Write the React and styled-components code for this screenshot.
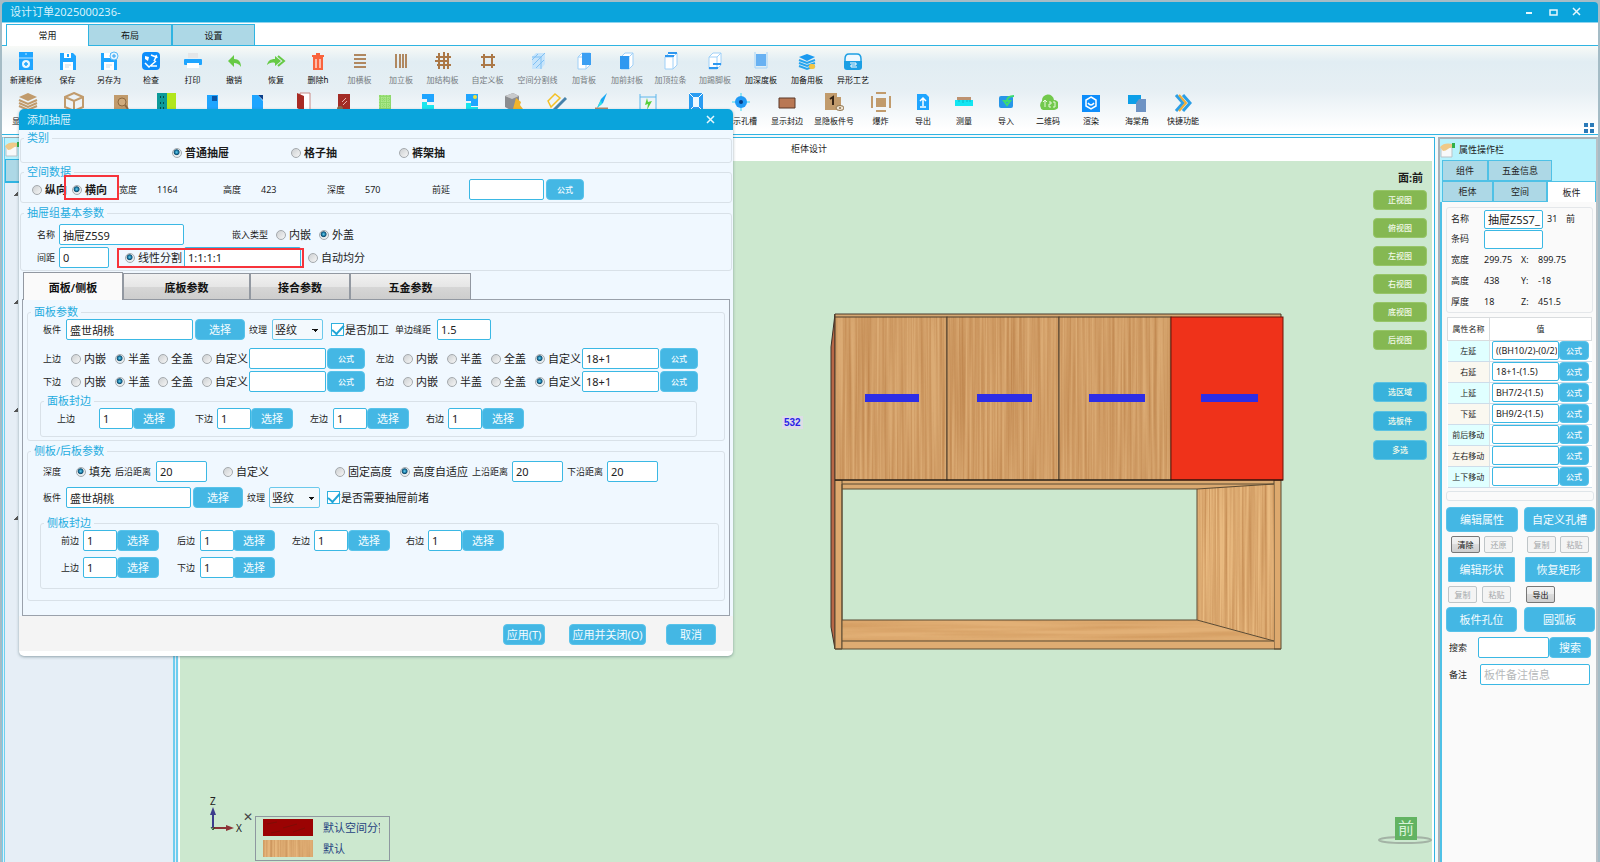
import React from 'react';
import styled, { createGlobalStyle, css } from 'styled-components';

const colors = {
  title: '#0aa4dc',
  line: '#2fb4e2',
  button: '#44b7e4',
  tab: '#add8e6',
  header: '#b8f2fd',
  canvas: '#cce8cf',
  dialog: '#f0f8ff',
};

const GlobalStyle = createGlobalStyle`
  * { box-sizing: border-box; }
  body {
    margin: 0;
    background: #a5bcc6;
    font-family: 'Noto Sans', 'Noto Sans CJK SC', sans-serif;
    font-size: 9px;
    line-height: 12px;
    color: #1c1c1c;
  }
  button, input, select { font-family: inherit; margin: 0; padding: 0; }
`;

const Window = styled.div`
  position: relative;
  display: flex;
  flex-direction: column;
  min-height: 100vh;
  padding: 2px 2px 0;
`;

const TitleBar = styled.header`
  display: flex;
  align-items: center;
  justify-content: space-between;
  height: 21px;
  padding: 0 13px 0 8px;
  border-bottom: 1px solid #8fd4ee;
  border-radius: 4px 4px 0 0;
  background: ${colors.title};
  color: #d6f1fb;
  font-size: 11px;
`;

const WindowButtons = styled.div`
  display: flex;
  gap: 8px;
`;

const GlyphButton = styled.button`
  display: flex;
  align-items: center;
  justify-content: center;
  width: 16px;
  height: 16px;
  border: 0;
  background: none;
  color: #e6f7fd;
`;

const RibbonTabs = styled.nav`
  display: flex;
  height: 23px;
  padding: 1px 0 0 4px;
  border-bottom: 1px solid ${colors.line};
  background: #fff;
`;

const RibbonTab = styled.button`
  width: ${({ $w }) => $w}px;
  height: ${({ $active }) => ($active ? 22 : 21)}px;
  border: 1px solid ${colors.line};
  border-bottom: 0;
  border-right-width: ${({ $active }) => ($active ? 0 : 1)}px;
  background: ${({ $active }) => ($active ? '#fff' : colors.tab)};
  color: #111;
  font-size: 9px;
`;

const Ribbon = styled.div`
  position: relative;
  display: flex;
  flex-direction: column;
  gap: 7px;
  padding: 5px 3px 8px;
  border-bottom: 1px solid ${colors.line};
  background: linear-gradient(#f8faf7, #e1edf3 18%, #e6eff4 50%, #fff 95%);
`;

const ToolRow = styled.div`
  display: flex;
`;

const Tool = styled.button`
  display: flex;
  flex: none;
  flex-direction: column;
  align-items: center;
  gap: 4px;
  width: ${({ $w }) => $w}px;
  height: 34px;
  border: 0;
  background: none;
  color: ${({ $off }) => ($off ? '#757b80' : '#0c0c0c')};
  font-size: 8px;
  line-height: 10px;
  white-space: nowrap;

  svg { flex: none; }
`;

const RibbonCorner = styled.svg`
  position: absolute;
  right: 3px;
  bottom: 0;
`;

const Body = styled.div`
  display: flex;
  flex: 1;
  gap: 1px;
  padding-top: 2px;
  background: #f4f9fb;
`;

const Tree = styled.aside`
  width: 176px;
  border-left: 3px double #6fd0ee;
  border-right: 5px double #6fcdee;
  border-top: 1px solid #9aa5ab;
  background: #e6eef6;
`;

const PanelHeader = styled.div`
  display: flex;
  align-items: center;
  gap: 3px;
  height: 21px;
  background: ${colors.header};
`;

const TreeTab = styled.div`
  width: 60px;
  height: 23px;
  border: 1px solid ${colors.line};
  background: ${colors.tab};
`;

const TreeItems = styled.div`
  display: flex;
  flex-direction: column;
  gap: 104px;
  padding: 9px 0 0 9px;
  border-top: 1px solid ${colors.line};
`;

const Expander = styled.div`
  width: 4px;
  height: 4px;
  background: linear-gradient(135deg, transparent 50%, #555 50%);
`;

const Main = styled.main`
  display: flex;
  flex: 1;
  flex-direction: column;
  border-top: 1px solid ${colors.line};
  border-right: 1px solid ${colors.line};
  margin-right: 2px;
  background: #fff;
`;

const DocTitle = styled.div`
  height: 23px;
  padding: 5px 0 0 5px;
  text-align: center;
`;

const Canvas = styled.div`
  position: relative;
  flex: 1;
  min-height: 640px;
  margin: 0 2px 0 1px;
  background: ${colors.canvas};
`;

const Cabinet = styled.svg`
  position: absolute;
  top: 129px;
  left: 50%;
  margin-left: -36px;
`;

const Dimension = styled.div`
  position: absolute;
  top: 255px;
  left: 50%;
  margin-left: -24px;
  padding: 0 2px;
  background: #dcdce6;
  color: #2a22e8;
  font: bold 10px/13px 'Liberation Sans', sans-serif;
`;

const ViewTools = styled.div`
  position: absolute;
  top: 10px;
  right: 5px;
  display: flex;
  flex-direction: column;
  align-items: flex-end;
`;

const Facing = styled.strong`
  padding: 0 4px 5px 0;
  font-size: 11px;
  line-height: 14px;
`;

const ViewGroup = styled.div`
  display: flex;
  flex-direction: column;
  gap: ${({ $gap }) => $gap}px;
  margin-bottom: 32px;
`;

const ViewButton = styled.button`
  width: 54px;
  height: 20px;
  border: 1px solid ${({ $blue }) => ($blue ? '#5cc3e2' : '#97c568')};
  border-radius: 4px;
  background: ${({ $blue }) => ($blue ? '#38b2dc' : '#85b852')};
  color: #f2fae9;
  font-size: 8px;
  font-weight: 500;
  line-height: 10px;
`;

const Axes = styled.svg`
  position: absolute;
  left: 22px;
  bottom: 22px;
`;

const Legend = styled.div`
  position: absolute;
  left: 75px;
  bottom: 1px;
  display: flex;
  flex-direction: column;
  gap: 4px;
  width: 135px;
  padding: 2px 8px 3px 7px;
  border: 1px solid #8e98a0;
  color: #27437f;
  font-size: 11px;
  line-height: 17px;
`;

const LegendRow = styled.div`
  display: flex;
  gap: 10px;
  height: 17px;
  overflow: hidden;
  white-space: nowrap;

  svg { flex: none; }
  span { width: 57px; overflow: hidden; }
`;

const LegendClose = styled.div`
  position: absolute;
  left: 63px;
  bottom: 39px;
  color: #444;
  font-size: 12px;
`;

const NavCube = styled.div`
  position: absolute;
  right: 0;
  bottom: 16px;
  width: 54px;
  height: 29px;
`;

const CubeFace = styled.div`
  position: absolute;
  top: 0;
  left: 17px;
  width: 22px;
  height: 23px;
  background: #62b362;
  color: #d7f2d7;
  font-size: 16px;
  line-height: 22px;
  text-align: center;
`;

const Props = styled.aside`
  display: flex;
  flex-direction: column;
  width: 160px;
  border: 2px solid #a9b2b8;
  border-bottom: 0;
  border-right: 2px solid #b9c1c6;
  background: #fafafa;
`;

const PropTabs = styled.div`
  display: flex;
  align-items: flex-end;
  height: 21px;
  padding-left: 2px;
  background: ${colors.header};
`;

const PropTab = styled.button`
  width: ${({ $w }) => $w}px;
  height: 21px;
  border: 1px solid #4fc1e6;
  border-bottom-width: ${({ $active }) => ($active ? 0 : 1)}px;
  background: ${({ $active }) => ($active ? '#fff' : colors.tab)};
  color: #222;
  font-size: 9px;
`;

const PropBody = styled.div`
  flex: 1;
  padding: 5px 1px 0 4px;
  border-left: 2px solid #4fc1e6;
`;

const PropBox = styled.div`
  padding: 1px 0 0 4px;
  border: 1px solid #e4e7ea;
  border-radius: 3px;
  width: 147px;
`;

const InfoRow = styled.div`
  display: grid;
  grid-template-columns: ${({ $cols = '33px 37px 17px auto' }) => $cols};
  align-items: center;
  height: ${({ $h = 20 }) => $h}px;
  padding-left: ${({ $pl = 0 }) => $pl}px;
  white-space: nowrap;
`;

const inputBox = css`
  height: ${({ $h = 21 }) => $h}px;
  width: ${({ $w }) => $w}px;
  border: 1px solid #3bb8e4;
  border-radius: 2px;
  background: #fff;
  color: #222;
`;

const TextInput = styled.input`
  ${inputBox}
  padding: 0 1px 0 3px;
  font-size: ${({ $size = 11 }) => $size}px;

  &::placeholder { color: #b5b8ba; opacity: 1; }
`;

const PropTable = styled.table`
  width: 144px;
  margin-left: 1px;
  margin-top: 4px;
  border-collapse: collapse;
  table-layout: fixed;
  background: #fff;

  th {
    height: 23px;
    padding: 0;
    border: 1px solid #d9dcde;
    font-size: 8px;
    font-weight: 400;
  }
  tbody th {
    height: 21px;
    border: 0;
    border-right: 1px solid #dbe2e6;
    border-bottom: 1px solid #cdddea;
  }
  tbody tr:nth-child(odd) th { background: #e0ffff; }
  tbody tr:nth-child(even) th { background: #faf8f0; }
  td {
    padding: 0 0 1px 2px;
    border-bottom: 1px solid #cdddea;
  }
`;

const ValueCell = styled.div`
  display: flex;
  height: 19px;
`;

const BlueButton = styled.button`
  width: ${({ $w }) => $w}px;
  height: ${({ $h = 21 }) => $h}px;
  border: 1px solid #58c3ea;
  border-radius: ${({ $square }) => ($square ? 1 : 4)}px;
  background: ${colors.button};
  color: #f4fcff;
  font-size: ${({ $size = 11 }) => $size}px;
  font-weight: ${({ $size = 11 }) => ($size < 10 ? 500 : 400)};
  line-height: 12px;
  white-space: nowrap;
`;

const EmptyBox = styled.div`
  width: 148px;
  height: 10px;
  margin: 3px 0 6px;
  border: 1px solid #dfe5e9;
  border-radius: 3px;
`;

const Actions = styled.div`
  display: flex;
  gap: ${({ $gap }) => $gap}px;
  padding-left: ${({ $pl = 0 }) => $pl}px;
  margin-bottom: ${({ $mb = 4 }) => $mb}px;
`;

const GreyButton = styled.button`
  width: 29px;
  height: 17px;
  border: 1px solid #777;
  border-radius: 2px;
  background: linear-gradient(#f3f3f3, #ebebeb 50%, #dcdcdc 50%, #cfcfcf);
  color: #111;
  font-size: 8px;
  line-height: 10px;

  &:disabled {
    border-color: #bfc5c8;
    background: #f4f4f4;
    color: #a3a7a9;
  }
`;

const GreySpacer = styled.span`
  width: ${({ $w }) => $w}px;
`;

const Dialog = styled.section`
  position: absolute;
  top: 109px;
  left: 19px;
  width: 714px;
  border-radius: 5px;
  background: #fff;
  box-shadow: 0 1px 3px rgba(60, 90, 100, 0.5);
  overflow: hidden;
`;

const DialogTitle = styled.header`
  display: flex;
  align-items: center;
  justify-content: space-between;
  height: 21px;
  padding: 0 14px 0 8px;
  background: ${colors.title};
  color: #d6f1fb;
  font-size: 11px;
`;

const DialogBody = styled.div`
  padding: 1px 1px 0;
  background: ${colors.dialog};
`;

const Group = styled.fieldset`
  min-width: 0;
  margin: ${({ $m = 0 }) => $m};
  padding: ${({ $p = 0 }) => $p};
  border: 1px solid #d9e1e8;
  border-radius: 3px;

  > legend {
    margin-left: 3px;
    padding: 0 3px;
    color: #26ace0;
    font-size: 11px;
    line-height: 14px;
  }
`;

const Row = styled.div`
  position: relative;
  display: grid;
  grid-template-columns: ${({ $cols }) => $cols};
  align-items: center;
  height: ${({ $h = 21 }) => $h}px;
  padding-left: ${({ $pl }) => $pl}px;
  margin-top: ${({ $mt = 0 }) => $mt}px;
  white-space: nowrap;
`;

const Marker = styled.span`
  position: absolute;
  top: ${({ $top }) => $top}px;
  left: ${({ $left }) => $left}px;
  width: ${({ $w }) => $w}px;
  height: ${({ $h }) => $h}px;
  border: 2px solid #f7333b;
  pointer-events: none;
`;

const Choice = styled.label`
  display: inline-flex;
  align-items: center;
  gap: ${({ $gap = 3 }) => $gap}px;
  font-size: 11px;
  font-weight: ${({ $bold }) => ($bold ? 600 : 400)};
`;

const RadioDot = styled.input.attrs({ type: 'radio' })`
  appearance: none;
  flex: none;
  width: 10px;
  height: 10px;
  border: 1px solid #a4a9ad;
  border-radius: 50%;
  background: linear-gradient(135deg, #cdd0d2, #f6f6f6);

  &:checked {
    background: radial-gradient(circle at 45% 40%, #6ad4f2 0, #17739f 28%, #134f70 38%, #e8edef 52%);
  }
`;

const CheckMark = styled.input.attrs({ type: 'checkbox' })`
  appearance: none;
  display: grid;
  place-items: center;
  flex: none;
  width: 13px;
  height: 13px;
  border: 1px solid #2fb0de;
  background: #fff;

  &:checked::after {
    content: '';
    width: 10px;
    height: 5px;
    border: solid #20a4d6;
    border-width: 0 0 2px 2px;
    transform: translateY(-1px) rotate(-48deg);
  }
`;

const Select = styled.select`
  ${inputBox}
  appearance: none;
  padding: 0 2px;
  border-color: #6bc9ec;
  background: linear-gradient(45deg, transparent 50%, #111 50%) right 7px top 9px / 3px 3px no-repeat,
    linear-gradient(-45deg, transparent 50%, #111 50%) right 4px top 9px / 3px 3px no-repeat, #f3f9fd;
  font-size: 11px;
`;

const FormTabs = styled.div`
  position: relative;
  display: flex;
  align-items: flex-end;
  height: 28px;
  margin: 1px 0 0 3px;
`;

const FormTab = styled.button`
  width: ${({ $w }) => $w}px;
  height: ${({ $active }) => ($active ? 28 : 27)}px;
  border: 1px solid #9298a1;
  border-bottom-width: ${({ $active }) => ($active ? 0 : 1)}px;
  background: ${({ $active }) =>
    $active ? '#fafafa' : 'linear-gradient(#f1f1f1, #e6e6e6 50%, #d6d6d6 52%, #cdcdcd)'};
  color: #111;
  font-size: 11px;
  font-weight: 600;
`;

const FormPanel = styled.div`
  margin: -1px 2px 0;
  padding: 5px 4px 14px;
  border: 1px solid #9aa1ab;
`;

const DialogFooter = styled.footer`
  display: flex;
  justify-content: flex-end;
  height: 35px;
  padding: 8px 17px 0 0;
  margin-bottom: 5px;
  background: #f4f4f4;
`;

const FooterButton = styled(BlueButton)`
  margin-left: ${({ $ml = 0 }) => $ml}px;
`;

/* ---------- toolbar drawings, all on a 20 x 20 grid ---------- */

const B = '#1fa5ff';
const W = '#c19b6c';

const cube = (
  <path d="M4 6h8v12H4zM4 6l4-4h8v12l-4 4M12 6l4-4" fill="#fff" stroke="#9fd0f8" />
);

const icons = {
  cabinet: (
    <>
      <path d="M3 1h14v18H3z" fill={B} />
      <path d="M3 7h14M10 2v2" stroke="#bfe6ff" />
      <circle cx="10" cy="13" r="4" fill="#e9f7ff" />
      <path d="M10 11v4M8 13h4" stroke={B} strokeWidth="1.5" />
    </>
  ),
  save: (
    <>
      <path d="M2 2h13l3 3v14H2z" fill={B} />
      <path d="M6 2h7v5H6zM5 11h10v8H5z" fill="#fff" />
      <path d="M10 3v3" stroke={B} strokeWidth="2" />
      <path d="M7 14h6M7 16h4" stroke="#c9dbe8" />
    </>
  ),
  saveAs: (
    <>
      <path d="M2 2h13l3 3v14H2z" fill={B} />
      <path d="M5 2h6v5H5zM5 11h10v8H5z" fill="#fff" />
      <path d="M7 14h6M7 16h4" stroke="#c9dbe8" />
      <circle cx="15" cy="5" r="4" fill="#e6f4ff" stroke="#5dbcf8" />
      <path d="M15 3v4M13 5h4" stroke="#2aa0ee" />
    </>
  ),
  check: (
    <>
      <rect x="1" y="1" width="18" height="18" rx="4" fill="#0d8dfb" />
      <path d="M4 5l4 1-1 4-3-2z" fill="#fff" />
      <path d="M10 4l5 2-2 4M15 4l1 3M4 12l4 4 7-6M10 15h6" stroke="#fff" fill="none" strokeWidth="1.5" />
    </>
  ),
  print: (
    <>
      <path d="M5 2h10v5H5z" fill="#e4e6e8" />
      <rect x="1" y="8" width="18" height="6" rx="1" fill={B} />
      <path d="M4 12h12v5H4z" fill="#fff" />
    </>
  ),
  undo: <path d="M10 4v4c5 0 7 3 7 8-2-3-4-4-7-4v4L4 10z" fill="#66ca45" />,
  redo: (
    <>
      <path d="M9 5v3c-5 0-7 2-8 6 2-2 5-3 8-2v3l6-5z" fill="#66ca45" />
      <path d="M12 5l6 5-6 5" fill="none" stroke="#66ca45" strokeWidth="2" />
    </>
  ),
  trash: (
    <>
      <path d="M5 6h10v13H5zM4 4h12v2H4zM8 2h4v2H8z" fill="#f9633c" />
      <path d="M8 8v9M12 8v9" stroke="#ffd8cb" strokeWidth="1.5" />
    </>
  ),
  hBars: <path d="M4 4h12M4 8h12M4 12h12M4 16h12" stroke="#b08860" strokeWidth="2" />,
  vBars: <path d="M5 3v14M9 3v14M12 3v14M15 3v14" stroke="#b08860" strokeWidth="2" />,
  lattice: (
    <path d="M6 2v16M11 1v17M15 2v16M3 6h15M2 10h12M4 14h14" stroke="#ab7847" strokeWidth="2" />
  ),
  hash: <path d="M6 3v14M14 3v14M3 6h14M3 14h14" stroke="#ab7847" strokeWidth="2" />,
  split: (
    <>
      <path d="M4 6l4-4h9v11l-4 5H4z" fill="#c6e4fb" />
      <path d="M4 9l6-6M5 14l9-9M8 17l8-8M4 6h9v12M13 6l4-4" stroke="#7fc0f3" fill="none" />
    </>
  ),
  back: (
    <>
      {cube}
      <path d="M8 2h9v12H8z" fill="#3b9ff3" />
    </>
  ),
  front: (
    <>
      {cube}
      <path d="M3 5h9v13H3z" fill="#2f98f0" />
    </>
  ),
  topBar: (
    <>
      {cube}
      <path d="M4 5h9M7 2h9" stroke="#2f98f0" strokeWidth="2" />
    </>
  ),
  kick: (
    <>
      {cube}
      <path d="M4 17h9M8 13h8" stroke="#2f98f0" strokeWidth="2" />
    </>
  ),
  depth: (
    <>
      <path d="M5 3h10v12H5z" fill="#68b1f2" />
      <path d="M4 1v16h12V1" fill="none" stroke="#a5d4f8" />
    </>
  ),
  stack: (
    <>
      <path d="M10 3l8 3-8 4-8-4z" fill="#1a9af0" />
      <path d="M2 9l8 3 8-3M2 12l8 3 8-3M2 15l8 3 8-3" fill="none" stroke="#27a5ee" strokeWidth="2" />
      <rect x="12" y="13" width="6" height="5" rx="2" fill="#f5c542" />
    </>
  ),
  craft: (
    <>
      <path d="M2 11V8c0-4 2-5 4-5h8c2 0 4 1 4 5v3" fill="#eef8ff" stroke="#1c9fe4" strokeWidth="1.5" />
      <path d="M1 10h18v6q0 3-3 3H4q-3 0-3-3z" fill="#1c9fe4" />
      <path d="M7 12h6v2H8v2h6" fill="none" stroke="#fff" />
    </>
  ),
  layers: (
    <>
      <path d="M10 1l9 4-9 4-9-4z" fill={W} />
      <path d="M1 8l9 4 9-4M1 11l9 4 9-4M1 14l9 4 9-4" fill="none" stroke={W} strokeWidth="2" />
    </>
  ),
  box: (
    <path d="M10 1l9 4v10l-9 4-9-4V5zM1 5l9 4 9-4M10 9v10" fill="none" stroke={W} strokeWidth="2" />
  ),
  find: (
    <>
      <path d="M3 3h14v16H3z" fill={W} />
      <circle cx="11" cy="10" r="4" fill="#d0ab7c" stroke="#8e693f" />
      <path d="M14 13l3 4" stroke="#8e693f" strokeWidth="2" />
    </>
  ),
  doors: (
    <>
      <path d="M0 1h10v18H0z" fill="#0c9a9a" />
      <path d="M10 1h9v18h-9z" fill="#b2e61c" />
      <path d="M3 5h1M6 5h1M3 11h1M6 11h1M3 16h1M6 16h1" stroke="#033" strokeWidth="1.5" />
    </>
  ),
  cutSquare: (
    <>
      <path d="M5 3h11v16H5z" fill={B} />
      <path d="M10 4h5v5h-5z" fill="#0b55a5" />
    </>
  ),
  cutCorner: (
    <>
      <path d="M5 3h6l5 6v10H5z" fill={B} />
      <path d="M11 3h5v5z" fill="#0b3f8a" />
    </>
  ),
  door: (
    <>
      <path d="M8 1h10v17H8z" fill="#fff" stroke="#c98a86" />
      <path d="M5 1l7 3v16l-7-4z" fill="#a82b24" />
    </>
  ),
  glass: (
    <>
      <path d="M4 2h12v17H4z" fill="#a22c26" />
      <path d="M8 10l4-4M9 13l4-4" stroke="#e7b0aa" />
      <circle cx="6" cy="17" r="3" fill="#8b6a4a" />
    </>
  ),
  mesh: (
    <>
      <path d="M4 3h12v16H4z" fill="#8fd96c" />
      <path d="M4 6h12M4 9h12M4 12h12M4 15h12M7 3v16M10 3v16M13 3v16" stroke="#b9f09b" strokeDasharray="1 1" />
    </>
  ),
  piece: (
    <>
      <path d="M4 2h12v8H9V7H4z" fill={B} />
      <path d="M4 10h5v3h7v6H4z" fill="#18e6ee" />
    </>
  ),
  pieceDot: (
    <>
      <path d="M4 2h12v12H9V9H4z" fill={B} />
      <path d="M4 11h5v4h7v4H4z" fill="#18e6ee" />
      <circle cx="13" cy="5" r="2" fill="#f1e23d" />
    </>
  ),
  coins: (
    <>
      <path d="M1 4l8-3 6 3v11l-7 4-7-4z" fill="#8b8d90" />
      <path d="M1 4l7 3 7-3-6-3z" fill="#c8cacc" />
      <path d="M12 6l5 4-1 3 3 4-5 3-5-3z" fill="#f0b42c" />
    </>
  ),
  ruler: (
    <>
      <path d="M1 9l7-7 5 4-9 9z" fill="none" stroke="#f4c024" strokeWidth="1.5" />
      <path d="M19 6L7 18" stroke="#4883ab" strokeWidth="3" />
    </>
  ),
  brush: (
    <>
      <path d="M16 1l-4 10-6 5 4-9z" fill="#17a7f4" />
      <path d="M10 8l-4 8 5-4z" fill="#2ee4e6" />
      <path d="M4 17h13" stroke="#b48a6b" strokeWidth="3" />
    </>
  ),
  span: (
    <>
      <path d="M2 2v16M18 2v16M2 5h16" stroke="#5cb6ec" fill="none" />
      <path d="M9 6l1 4 4-1-5 9 1-6-3 1z" fill="#58cf3c" />
    </>
  ),
  frame: (
    <>
      <path d="M3 1h14v18H3z" fill="#2a9df2" />
      <path d="M7 5h6v10H7z" fill="#eef8ff" />
      <path d="M3 1l4 4M17 1l-4 4M3 19l4-4M17 19l-4-4" stroke="#fff" />
    </>
  ),
  hole: (
    <>
      <path d="M10 1v18M1 10h18" stroke="#36d6f4" />
      <circle cx="10" cy="10" r="6" fill="#1f9af5" />
      <circle cx="10" cy="10" r="2" fill="#073d84" />
    </>
  ),
  edge: <path d="M2 6h16v10H2z" fill="#b97854" stroke="#5a3929" />,
  number: (
    <>
      <path d="M1 1h12v4h4v13H1z" fill={W} />
      <path d="M6 7l3-2v8" fill="none" stroke="#352415" strokeWidth="2" />
      <ellipse cx="16" cy="16" rx="4" ry="2.500" fill="#efe4d2" stroke="#8e744f" />
      <circle cx="16" cy="16" r="1" fill="#8e744f" />
    </>
  ),
  explode: (
    <>
      <path d="M5 6h10v9H5z" fill={W} />
      <path d="M5 1h10M5 19h10M1 4v12M19 4v12" stroke={W} strokeWidth="2" />
    </>
  ),
  exportDoc: (
    <>
      <path d="M4 2h9l3 3v13H4z" fill={B} />
      <path d="M10 14V7M7 9l3-3 3 3M7 15h6" stroke="#fff" strokeWidth="1.5" fill="none" />
    </>
  ),
  measure: (
    <>
      <path d="M3 5h14v3H3z" fill="#bd9270" />
      <path d="M1 8h18v6H1z" fill="#12e6f2" />
      <path d="M5 8v2M9 8v3M13 8v2M16 8v2" stroke="#0bb6c8" />
    </>
  ),
  importDoc: (
    <>
      <rect x="3" y="4" width="14" height="12" rx="2" fill="#2796e8" />
      <path d="M18 4c-5 0-7 2-7 5M8 9l3 4 3-4z" stroke="#3ddb72" strokeWidth="2" />
    </>
  ),
  cloud: (
    <>
      <path d="M5 18a4 5 0 0 1-1-9 6 6 0 0 1 12-1 5 5 0 0 1 0 10z" fill="#72c94c" />
      <path d="M7 15V8M5 10l2-2 2 2M11 10h2v2h-2v3h2M15 10h2v5h-2" stroke="#e8f8de" fill="none" />
    </>
  ),
  render: (
    <>
      <path d="M1 3h18v17H1z" fill="#0d8dfb" />
      <path d="M10 5l5 3v6l-5 3-5-3V8z" fill="none" stroke="#fff" strokeWidth="1.5" />
      <path d="M7 11q3 4 6 0" fill="none" stroke="#fff" strokeWidth="1.5" />
    </>
  ),
  corner: (
    <>
      <path d="M1 3h13v9H1z" fill="#0d9fe8" />
      <path d="M9 11l3-4h7v13H9z" fill="#6e93c4" />
    </>
  ),
  quick: (
    <>
      <path d="M3 3l7 8-7 8M10 3l7 8-7 8" fill="none" stroke="#2c9fe6" strokeWidth="3" />
      <path d="M6 3l7 8-7 8" fill="none" stroke="#f0ae36" strokeWidth="2" />
    </>
  ),
};

// [icon, label, cell width, greyed out]
const toolRows = [
  [
    ['cabinet', '新建柜体', 42],
    ['save', '保存', 41],
    ['saveAs', '另存为', 42],
    ['check', '检查', 42],
    ['print', '打印', 41],
    ['undo', '撤销', 42],
    ['redo', '恢复', 42],
    ['trash', '删除h', 42],
    ['hBars', '加横板', 41, true],
    ['vBars', '加立板', 42, true],
    ['lattice', '加结构板', 41, true],
    ['hash', '自定义板', 49, true],
    ['split', '空间分割线', 51, true],
    ['back', '加背板', 42, true],
    ['front', '加前封板', 44, true],
    ['topBar', '加顶拉条', 43, true],
    ['kick', '加踢脚板', 46, true],
    ['depth', '加深度板', 46],
    ['stack', '加备用板', 46],
    ['craft', '异形工艺', 46],
  ],
  [
    ['layers', '显示柜体', 46],
    ['box', '', 46],
    ['find', '', 48],
    ['doors', '', 44],
    ['cutSquare', '', 46],
    ['cutCorner', '', 44],
    ['door', '', 45],
    ['glass', '', 40],
    ['mesh', '', 42],
    ['piece', '', 44],
    ['pieceDot', '', 43],
    ['coins', '', 42],
    ['ruler', '', 43],
    ['brush', '', 45],
    ['span', '', 50],
    ['frame', '', 45],
    ['hole', '显示孔槽', 46],
    ['edge', '显示封边', 46],
    ['number', '显隐板件号', 48],
    ['explode', '爆炸', 45],
    ['exportDoc', '导出', 40],
    ['measure', '测量', 42],
    ['importDoc', '导入', 42],
    ['cloud', '二维码', 42],
    ['render', '渲染', 44],
    ['corner', '海棠角', 48],
    ['quick', '快捷功能', 44],
  ],
];

const ToolIcon = ({ name }) => (
  <svg width="20" height="20" viewBox="0 0 20 20" fill="none">
    {icons[name]}
  </svg>
);

const HandIcon = () => (
  <svg width="16" height="16" viewBox="0 0 16 16">
    <path d="M1 5h11v10H1z" fill="#f7f9fa" stroke="#b9c3c9" />
    <path d="M0 5c3-4 8-4 13-3v3c-4 0-6 4-10 4z" fill="#efc988" />
    <path d="M12 1h3v5h-3z" fill="#31b04a" />
  </svg>
);

const CloseGlyph = () => (
  <svg width="10" height="10" viewBox="0 0 10 10">
    <path d="M1 1l7 7M8 1L1 8" stroke="currentColor" strokeWidth="1.5" />
  </svg>
);

/* ---------- scene ---------- */

const doorsX = [65, 177, 289];
const handles = [
  [95, 54],
  [207, 55],
  [319, 56],
  [431, 57],
];

const WoodDefs = () => (
  <defs>
    <filter id="grainV" x="0" y="0" width="100%" height="100%" colorInterpolationFilters="sRGB">
      <feTurbulence type="fractalNoise" baseFrequency="0.4 0.006" numOctaves="2" seed="4" />
      <feColorMatrix values="0 0 0 0 0.7  0 0 0 0 0.46  0 0 0 0 0.24  1.2 0 0 0 -0.35" />
      <feComposite in2="SourceGraphic" operator="in" result="grain" />
      <feMerge>
        <feMergeNode in="SourceGraphic" />
        <feMergeNode in="grain" />
      </feMerge>
    </filter>
    <filter id="grainH" x="0" y="0" width="100%" height="100%" colorInterpolationFilters="sRGB">
      <feTurbulence type="fractalNoise" baseFrequency="0.006 0.2" numOctaves="2" seed="9" />
      <feColorMatrix values="0 0 0 0 0.76  0 0 0 0 0.52  0 0 0 0 0.28  1 0 0 0 -0.35" />
      <feComposite in2="SourceGraphic" operator="in" result="grain" />
      <feMerge>
        <feMergeNode in="SourceGraphic" />
        <feMergeNode in="grain" />
      </feMerge>
    </filter>
  </defs>
);

const CabinetDrawing = () => (
  <Cabinet width="540" height="380" viewBox="0 0 540 380">
    <WoodDefs />
    <path d="M65 24l-4 33v280l4 22z" fill="#b86747" stroke="#3d3027" />
    <path d="M65 24h446v4H65z" fill="#d6a873" stroke="#4b3b2a" />
    <path d="M65 190h446v9H65z" fill="#dba970" />
    <path d="M65 190h7v169h-7zM504 190h7v169h-7z" fill="#dda96e" stroke="#5b4a33" />
    <path d="M72 330h355l77 21H72z" fill="#e2b076" filter="url(#grainH)" />
    <path d="M427 199l77-5v157l-77-21z" fill="#e9ba80" filter="url(#grainV)" />
    <path d="M72 351h432v8H72z" fill="#deac72" />
    <path d="M72 194h432M72 199h355v131l77 21M72 330h355M72 351h432M427 199l77-5M65 359h446M72 194v165" fill="none" stroke="#5b4a33" />
    {doorsX.map(x => (
      <g key={x}>
        <rect x={x} y="27" width="112" height="163" fill="#dbab74" filter="url(#grainV)" />
        <rect x={x} y="27" width="112" height="163" fill="none" stroke="#4f3e2c" />
      </g>
    ))}
    <rect x="401" y="27" width="112" height="163" fill="#ef321a" stroke="#6d1409" />
    <path d="M65 190h448" stroke="#17120d" />
    {handles.map(([x, w]) => (
      <rect key={x} x={x} y="104" width={w} height="8" fill="#2d2de6" />
    ))}
  </Cabinet>
);

const Scene = () => (
  <Canvas>
    <CabinetDrawing />
    <Dimension>532</Dimension>
    <ViewTools>
      <Facing>面:前</Facing>
      <ViewGroup $gap={8}>
        {['正视图', '俯视图', '左视图', '右视图', '底视图', '后视图'].map(v => (
          <ViewButton key={v}>{v}</ViewButton>
        ))}
      </ViewGroup>
      <ViewGroup $gap={9}>
        {['选区域', '选板件', '多选'].map(v => (
          <ViewButton key={v} $blue>{v}</ViewButton>
        ))}
      </ViewGroup>
    </ViewTools>
    <Axes width="46" height="50" viewBox="0 -6 46 50">
      <path d="M11 32V18" stroke="#3c3c8c" strokeWidth="2" />
      <path d="M11 11l3 8H8z" fill="#3c3c8c" />
      <path d="M11 32h14" stroke="#8c3236" strokeWidth="2" />
      <path d="M32 32l-8 3v-6z" fill="#8c3236" />
      <path d="M9 31l2 3 2-3" stroke="#245c2a" fill="none" />
      <text x="8" y="9" fontSize="10" fill="#222">Z</text>
      <text x="34" y="36" fontSize="10" fill="#222">X</text>
    </Axes>
    <LegendClose>✕</LegendClose>
    <Legend>
      <LegendRow>
        <svg width="50" height="17">
          <rect width="50" height="17" fill="#9b0303" />
          <path d="M4 5l10-2M20 9l14-4M30 13l12-4M8 14l9-2" stroke="#7f0c06" />
        </svg>
        <span>默认空间分割</span>
      </LegendRow>
      <LegendRow>
        <svg width="50" height="17">
          <rect width="50" height="17" fill="#e9ba80" filter="url(#grainV)" />
        </svg>
        <span>默认</span>
      </LegendRow>
    </Legend>
    <NavCube>
      <svg width="54" height="29" viewBox="0 0 54 29">
        <ellipse cx="27" cy="23" rx="26" ry="3" fill="none" stroke="#a3b3a5" strokeWidth="2" />
      </svg>
      <CubeFace>前</CubeFace>
    </NavCube>
  </Canvas>
);

/* ---------- property panel ---------- */

const propRows = [
  ['左延', '((BH10/2)-(0/2)'],
  ['右延', '18+1-(1.5)'],
  ['上延', 'BH7/2-(1.5)'],
  ['下延', 'BH9/2-(1.5)'],
  ['前后移动', ''],
  ['左右移动', ''],
  ['上下移动', ''],
];

const sizes = [
  ['宽度', '299.75', 'X:', '899.75'],
  ['高度', '438', 'Y:', '-18'],
  ['厚度', '18', 'Z:', '451.5'],
];

const PropertyPanel = () => (
  <Props>
    <PanelHeader>
      <HandIcon />
      属性操作栏
    </PanelHeader>
    <PropTabs>
      <PropTab $w={46}>组件</PropTab>
      <PropTab $w={64}>五金信息</PropTab>
    </PropTabs>
    <PropTabs>
      <PropTab $w={51}>柜体</PropTab>
      <PropTab $w={54}>空间</PropTab>
      <PropTab $w={49} $active>板件</PropTab>
    </PropTabs>
    <PropBody>
      <PropBox>
        <InfoRow $cols="33px 63px 19px auto">
          <label htmlFor="partName">名称</label>
          <TextInput id="partName" $w={59} $h={19} defaultValue="抽屉Z5S7_" />
          <span>31</span>
          <span>前</span>
        </InfoRow>
        <InfoRow $cols="33px auto">
          <label htmlFor="barcode">条码</label>
          <TextInput id="barcode" $w={59} $h={19} />
        </InfoRow>
        {sizes.map(row => (
          <InfoRow key={row[0]} $h={21}>
            {row.map(cell => <span key={cell}>{cell}</span>)}
          </InfoRow>
        ))}
      </PropBox>
      <PropTable>
        <colgroup>
          <col width="42" />
          <col width="102" />
        </colgroup>
        <thead>
          <tr>
            <th scope="col">属性名称</th>
            <th scope="col">值</th>
          </tr>
        </thead>
        <tbody>
          {propRows.map(([name, value]) => (
            <tr key={name}>
              <th scope="row">{name}</th>
              <td>
                <ValueCell>
                  <TextInput aria-label={name} $w={67} $h={19} $size={9} defaultValue={value} />
                  <BlueButton $w={30} $h={19} $size={8}>公式</BlueButton>
                </ValueCell>
              </td>
            </tr>
          ))}
        </tbody>
      </PropTable>
      <EmptyBox />
      <Actions $gap={6}>
        <BlueButton $w={72} $h={25}>编辑属性</BlueButton>
        <BlueButton $w={71} $h={25}>自定义孔槽</BlueButton>
      </Actions>
      <Actions $gap={4} $pl={5}>
        <GreyButton>清除</GreyButton>
        <GreyButton disabled>还原</GreyButton>
        <GreySpacer $w={6} />
        <GreyButton disabled>复制</GreyButton>
        <GreyButton disabled>粘贴</GreyButton>
      </Actions>
      <Actions $gap={10} $pl={2}>
        <BlueButton $w={67} $h={25} $square>编辑形状</BlueButton>
        <BlueButton $w={67} $h={25} $square>恢复矩形</BlueButton>
      </Actions>
      <Actions $gap={5} $pl={2}>
        <GreyButton disabled>复制</GreyButton>
        <GreyButton disabled>粘贴</GreyButton>
        <GreySpacer $w={5} />
        <GreyButton>导出</GreyButton>
      </Actions>
      <Actions $gap={7} $mb={5}>
        <BlueButton $w={71} $h={25}>板件孔位</BlueButton>
        <BlueButton $w={71} $h={25}>圆弧板</BlueButton>
      </Actions>
      <InfoRow $cols="29px 71px auto" $pl={3} $h={21}>
        <label htmlFor="search">搜索</label>
        <TextInput id="search" $w={71} />
        <BlueButton $w={42}>搜索</BlueButton>
      </InfoRow>
      <InfoRow $cols="31px auto" $pl={3} $h={33}>
        <label htmlFor="note">备注</label>
        <TextInput id="note" $w={110} placeholder="板件备注信息" />
      </InfoRow>
    </PropBody>
  </Props>
);

/* ---------- dialog ---------- */

const Radio = ({ name, on, bold, children }) => (
  <Choice $bold={bold}>
    <RadioDot name={name} defaultChecked={on} />
    {children}
  </Choice>
);

const covers = ['内嵌', '半盖', '全盖', '自定义'];

const CoverField = ({ id, label, value, text = '' }) => (
  <>
    <label htmlFor={id}>{label}</label>
    {covers.map(c => (
      <Radio key={c} name={`cover-${id}`} on={c === value}>{c}</Radio>
    ))}
    <TextInput id={id} $w={77} defaultValue={text} />
    <BlueButton $w={38} $size={8}>公式</BlueButton>
  </>
);

const EdgeFields = ({ prefix, labels }) =>
  labels.map(label => (
    <React.Fragment key={label}>
      <label htmlFor={`${prefix}-${label}`}>{label}</label>
      <TextInput id={`${prefix}-${label}`} $w={34} defaultValue="1" />
      <BlueButton $w={42}>选择</BlueButton>
    </React.Fragment>
  ));

const coverCols =
  '28px 44px 43px 44px 47px 78px 49px 27px 44px 44px 44px 47px 78px auto';
const sideEdgeCols =
  '22px 34px 60px 23px 33px 59px 22px 34px 58px 22px 34px auto';

const DrawerDialog = () => (
  <Dialog role="dialog" aria-label="添加抽屉">
    <DialogTitle>
      添加抽屉
      <GlyphButton aria-label="关闭"><CloseGlyph /></GlyphButton>
    </DialogTitle>
    <DialogBody>
      <Group $p="0 0 2px">
        <legend>类别</legend>
        <Row $pl={151} $cols="119px 108px auto" $h={15}>
          <Radio name="kind" bold on>普通抽屉</Radio>
          <Radio name="kind" bold>格子抽</Radio>
          <Radio name="kind" bold>裤架抽</Radio>
        </Row>
      </Group>
      <Group $m="2px 0 0" $p="0 0 2px">
        <legend>空间数据</legend>
        <Row $pl={11} $cols="40px 47px 38px 66px 38px 66px 38px 67px 37px 77px auto">
          <Radio name="dir" bold>纵向</Radio>
          <Radio name="dir" bold on>横向</Radio>
          <span>宽度</span>
          <span>1164</span>
          <span>高度</span>
          <span>423</span>
          <span>深度</span>
          <span>570</span>
          <label htmlFor="frontExt">前延</label>
          <TextInput id="frontExt" $w={75} />
          <BlueButton $w={38} $size={8}>公式</BlueButton>
          <Marker $left={43} $top={-4} $w={55} $h={25} />
        </Row>
      </Group>
      <Group $m="3px 0 0" $p="4px 0 2px">
        <legend>抽屉组基本参数</legend>
        <Row $pl={16} $cols="22px 173px 44px 43px auto">
          <label htmlFor="drawerName">名称</label>
          <TextInput id="drawerName" $w={125} defaultValue="抽屉Z5S9" />
          <span>嵌入类型</span>
          <Radio name="embed">内嵌</Radio>
          <Radio name="embed" on>外盖</Radio>
        </Row>
        <Row $pl={16} $mt={2} $cols="22px 66px 59px 124px auto">
          <label htmlFor="spacing">间距</label>
          <TextInput id="spacing" $w={50} defaultValue="0" />
          <Radio name="split" on>线性分割</Radio>
          <TextInput aria-label="线性分割" $w={117} defaultValue="1:1:1:1" />
          <Radio name="split">自动均分</Radio>
          <Marker $left={96} $top={1} $w={187} $h={20} />
        </Row>
      </Group>
      <FormTabs>
        <FormTab $w={100} $active>面板/侧板</FormTab>
        <FormTab $w={127}>底板参数</FormTab>
        <FormTab $w={100}>接合参数</FormTab>
        <FormTab $w={121}>五金参数</FormTab>
      </FormTabs>
      <FormPanel>
        <Group $p="0 0 3px">
          <legend>面板参数</legend>
          <Row $pl={15} $cols="23px 129px 54px 23px 59px 64px 42px auto">
            <label htmlFor="panelPart">板件</label>
            <TextInput id="panelPart" $w={127} defaultValue="盛世胡桃" />
            <BlueButton $w={50}>选择</BlueButton>
            <label htmlFor="panelGrain">纹理</label>
            <Select id="panelGrain" $w={51}><option>竖纹</option></Select>
            <Choice $gap={1}>
              <CheckMark defaultChecked />
              是否加工
            </Choice>
            <label htmlFor="gap">单边缝距</label>
            <TextInput id="gap" $w={54} defaultValue="1.5" />
          </Row>
          <Row $pl={15} $mt={8} $cols={coverCols}>
            <CoverField id="top" label="上边" value="半盖" />
            <CoverField id="left" label="左边" value="自定义" text="18+1" />
          </Row>
          <Row $pl={15} $mt={2} $cols={coverCols}>
            <CoverField id="bottom" label="下边" value="半盖" />
            <CoverField id="right" label="右边" value="自定义" text="18+1" />
          </Row>
          <Group $m="2px 27px 0 12px" $p="0 0 7px">
            <legend>面板封边</legend>
            <Row
              $pl={16}
              $cols="42px 34px 62px 22px 34px 59px 23px 34px 59px 22px 34px auto"
            >
              <EdgeFields prefix="face" labels={['上边', '下边', '左边', '右边']} />
            </Row>
          </Group>
        </Group>
        <Group $m="3px 0 0" $p="3px 0 11px">
          <legend>侧板/后板参数</legend>
          <Row $pl={15} $cols="33px 39px 41px 67px 112px 65px 72px 40px 55px 40px auto">
            <span>深度</span>
            <Radio name="depth" on>填充</Radio>
            <label htmlFor="backGap">后沿距离</label>
            <TextInput id="backGap" $w={51} defaultValue="20" />
            <Radio name="depth">自定义</Radio>
            <Radio name="height">固定高度</Radio>
            <Radio name="height" on>高度自适应</Radio>
            <label htmlFor="topGap">上沿距离</label>
            <TextInput id="topGap" $w={51} defaultValue="20" />
            <label htmlFor="bottomGap">下沿距离</label>
            <TextInput id="bottomGap" $w={51} defaultValue="20" />
          </Row>
          <Row $pl={15} $mt={5} $cols="23px 127px 54px 22px 58px auto">
            <label htmlFor="sidePart">板件</label>
            <TextInput id="sidePart" $w={125} defaultValue="盛世胡桃" />
            <BlueButton $w={50}>选择</BlueButton>
            <label htmlFor="sideGrain">纹理</label>
            <Select id="sideGrain" $w={51}><option>竖纹</option></Select>
            <Choice $gap={1}>
              <CheckMark defaultChecked />
              是否需要抽屉前堵
            </Choice>
          </Row>
          <Group $m="8px 5px 0 12px" $p="0 0 10px">
            <legend>侧板封边</legend>
            <Row $pl={20} $cols={sideEdgeCols}>
              <EdgeFields prefix="side" labels={['前边', '后边', '左边', '右边']} />
            </Row>
            <Row $pl={20} $mt={6} $cols={sideEdgeCols}>
              <EdgeFields prefix="side" labels={['上边', '下边']} />
            </Row>
          </Group>
        </Group>
      </FormPanel>
    </DialogBody>
    <DialogFooter>
      <FooterButton $w={42}>应用(T)</FooterButton>
      <FooterButton $w={77} $ml={24}>应用并关闭(O)</FooterButton>
      <FooterButton $w={50} $ml={20}>取消</FooterButton>
    </DialogFooter>
  </Dialog>
);

export default function App() {
  return (
    <>
      <GlobalStyle />
      <Window>
        <TitleBar>
          设计订单2025000236-
          <WindowButtons>
            <GlyphButton aria-label="最小化">
              <svg width="10" height="10"><path d="M2 6h6" stroke="currentColor" strokeWidth="2" /></svg>
            </GlyphButton>
            <GlyphButton aria-label="最大化">
              <svg width="10" height="10"><path d="M2 3h7v5H2z" stroke="currentColor" strokeWidth="1.5" fill="none" /></svg>
            </GlyphButton>
            <GlyphButton aria-label="关闭窗口"><CloseGlyph /></GlyphButton>
          </WindowButtons>
        </TitleBar>
        <RibbonTabs>
          <RibbonTab $w={82} $active>常用</RibbonTab>
          <RibbonTab $w={84}>布局</RibbonTab>
          <RibbonTab $w={83}>设置</RibbonTab>
        </RibbonTabs>
        <Ribbon>
          {toolRows.map((row, i) => (
            <ToolRow key={i}>
              {row.map(([icon, label, w, off]) => (
                <Tool key={icon} $w={w} $off={off}>
                  <ToolIcon name={icon} />
                  {label}
                </Tool>
              ))}
            </ToolRow>
          ))}
          <RibbonCorner width="12" height="12">
            <path d="M1 1h4v4H1zM7 1h4v4H7zM1 7h4v4H1zM7 7h4v4H7z" fill="#2b7bb9" />
          </RibbonCorner>
        </Ribbon>
        <Body>
          <Tree>
            <PanelHeader><HandIcon /></PanelHeader>
            <TreeTab />
            <TreeItems>
              <Expander />
              <Expander />
              <Expander />
              <Expander />
            </TreeItems>
          </Tree>
          <Main>
            <DocTitle>柜体设计</DocTitle>
            <Scene />
          </Main>
          <PropertyPanel />
        </Body>
        <DrawerDialog />
      </Window>
    </>
  );
}
